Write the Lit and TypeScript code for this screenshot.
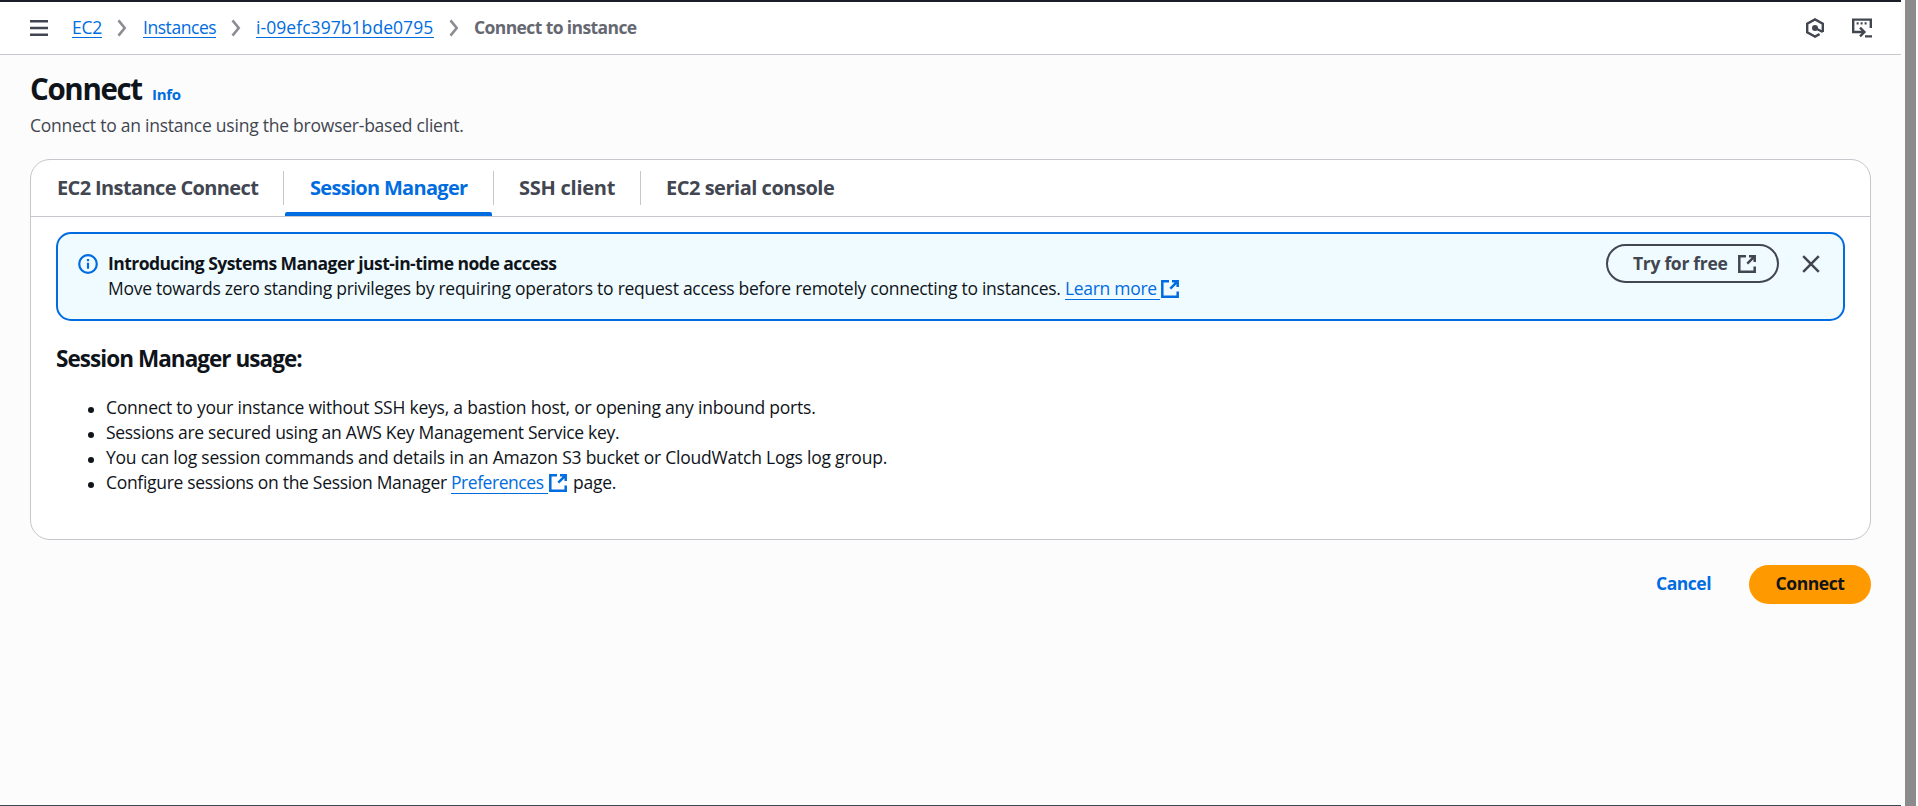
import { LitElement, html, css } from "lit";
import { customElement } from "lit/decorators.js";

const externalIcon = html`<svg class="icon external" viewBox="0 0 20 20" aria-hidden="true">
  <path d="M9 2.3H2.3v15.4h15.4v-5.2" /><path d="M12 2.3h5.7V8M17.3 2.7l-7 7" />
</svg>`;

const chevron = html`<svg class="chevron" viewBox="0 0 20 20" aria-hidden="true">
  <path d="m6.5 2.4 6.2 7.6-6.2 7.6" />
</svg>`;

@customElement("ec2-topbar")
export class Ec2Topbar extends LitElement {
  static styles = css`
    :host { display: flex; align-items: center; height: 52px; padding: 0 29px; background: #fff; border-bottom: 1px solid #c6c6cd; }
    svg { display: block; width: 20px; height: 20px; fill: none; stroke: #424650; stroke-width: 2.4; flex: none; }
    nav { display: flex; align-items: center; flex: 1; margin-left: 23px; padding-bottom: 1px; }
    a { color: #006ce0; text-decoration: none; line-height: 20px; border-bottom: 1.25px solid #006ce0; white-space: nowrap; }
    .service { width: 30px; letter-spacing: -0.3px; }
    .list { width: 73px; letter-spacing: -0.45px; }
    .instance { width: 178px; letter-spacing: 0.06px; }
    .current { color: #656871; font-weight: 700; letter-spacing: -0.6px; }
    .chevron { stroke: #8c8c94; stroke-width: 2.6; margin: 0 10px; }
    .chevron:first-of-type { margin-right: 11px; }
    .tools { display: flex; gap: 27px; }
  `;
  render() {
    return html`
      <svg viewBox="0 0 20 20"><path d="M1 3.2h18M1 10h18M1 16.8h18" /></svg>
      <nav>
        <a class="service">EC2</a>${chevron}
        <a class="list">Instances</a>${chevron}
        <a class="instance">i-09efc397b1bde0795</a>${chevron}
        <span class="current">Connect to instance</span>
      </nav>
      <div class="tools">
        <svg viewBox="0 0 20 20"><path d="M17.8 14V5.6L10 1.4 2.2 5.6v8.8L10 18.6l4.6-2.5M10 10l7.8 4" /><circle cx="10" cy="10" r="1.8" fill="#424650" /></svg>
        <svg viewBox="0 0 20 20"><path d="M5 14H1.2V1.6h17.6V10M5 14h7M8 9.6l4.4 4.4L8 18.4M13 18.4h7M4.6 5.4h2M8.6 5.4h2M12.6 5.4h2" /></svg>
      </div>
    `;
  }
}

@customElement("ec2-tabs")
export class Ec2Tabs extends LitElement {
  static styles = css`
    :host { display: flex; height: 56px; border-bottom: 1px solid #c6c6cd; padding-left: 1px; }
    .tab { display: flex; position: relative; box-sizing: border-box; padding: 15px 0 0 25px; color: #424650; font-size: 20px; line-height: 25px; font-weight: 700; white-space: nowrap; }
    .tab:not(:last-child)::after { content: ""; position: absolute; right: 0; top: 11px; width: 1px; height: 34px; background: #c6c6cd; }
    .connect { width: 252px; letter-spacing: -0.62px; }
    .session { width: 210px; letter-spacing: -0.7px; color: #006ce0; padding-left: 26px; }
    .session::before { content: ""; position: absolute; left: 1px; right: 2px; bottom: 0; height: 4px; border-radius: 2px 2px 0 0; background: #006ce0; }
    .ssh { width: 147px; letter-spacing: -0.25px; }
    .serial { width: 220px; letter-spacing: -0.48px; }
  `;
  render() {
    return html`
      <div class="tab connect">EC2 Instance Connect</div>
      <div class="tab session">Session Manager</div>
      <div class="tab ssh">SSH client</div>
      <div class="tab serial">EC2 serial console</div>
    `;
  }
}

@customElement("app-root")
export class AppRoot extends LitElement {
  static styles = css`
    :host { display: flex; height: 806px; box-sizing: border-box; overflow: hidden; background: #fcfcfd; color: #0f141a; font: 17.5px/25px "Open Sans", "Noto Sans", sans-serif; }
    .page { width: 1901px; height: 806px; box-sizing: border-box; border-top: 2px solid #1b1d28; border-bottom: 1px solid #424650; }
    .scroll { width: 17px; box-sizing: border-box; border-left: 4px solid #fcfcfd; border-right: 2px solid #fcfcfd; background: #8b8b8b; }
    main { padding: 15px 30px 0; }
    h1, h2, p, ul { margin: 0; }
    .title { display: flex; align-items: baseline; gap: 9px; height: 37px; }
    h1 { font-size: 29.5px; line-height: 37px; font-weight: 700; letter-spacing: -1.35px; width: 113px; white-space: nowrap; }
    .info { color: #006ce0; font-size: 15px; font-weight: 700; letter-spacing: -0.3px; }
    .lead { color: #424650; padding: 6px 0 0; margin-bottom: 21px; letter-spacing: -0.235px; }
    .card { box-sizing: border-box; height: 381px; border: 1px solid #c6c6cd; border-radius: 20px; background: #fff; }
    .body { padding: 15px 25px 0; }
    .alert { display: flex; box-sizing: border-box; height: 89px; border: 2px solid #006ce0; border-radius: 15px; background: #f0fbff; padding: 10px 22px 0 20px; align-items: flex-start; }
    .icon { width: 20px; height: 20px; fill: none; stroke: currentColor; stroke-width: 2.5; flex: none; }
    .status { color: #006ce0; margin: 10px 10px 0 0; stroke-width: 2.2; }
    .message { flex: 1; padding-top: 7px; }
    .headline { font-weight: 700; letter-spacing: -0.53px; }
    .text { letter-spacing: -0.264px; }
    a { display: inline-flex; align-items: flex-start; color: #006ce0; border-bottom: 1.25px solid #006ce0; line-height: 25px; vertical-align: top; }
    .learn { width: 95px; height: 23px; letter-spacing: -0.3px; }
    .prefs { width: 97px; height: 23px; letter-spacing: -0.45px; }
    .external { vertical-align: top; margin-top: 3px; }
    a + .external { color: #006ce0; }
    .try { display: flex; box-sizing: border-box; width: 173px; height: 39px; border: 2px solid #424650; border-radius: 20px; color: #424650; font-weight: 700; padding: 5px 0 0 25px; gap: 9px; white-space: nowrap; letter-spacing: -0.3px; }
    .try .external { margin-top: 3px; }
    .close { color: #424650; margin: 10px 0 0 22px; }
    h2 { font-size: 22.5px; line-height: 28px; font-weight: 700; letter-spacing: -0.95px; margin-top: 24px; }
    ul { list-style: none; padding: 22px 0 0 30px; }
    li { display: flex; align-items: flex-start; height: 25px; white-space: pre; }
    li::before { content: ""; width: 6px; height: 6px; border-radius: 50%; background: #0f141a; margin: 12px 12px 0 2px; }
    .ports { letter-spacing: -0.22px; }
    .key { letter-spacing: -0.3px; }
    .logs { letter-spacing: -0.22px; }
    .configure { letter-spacing: -0.31px; width: 345px; }
    .rest { letter-spacing: -0.25px; margin-left: 5px; }
    .actions { display: flex; justify-content: flex-end; align-items: center; margin-top: 25px; gap: 38px; }
    .cancel { color: #006ce0; font-weight: 700; letter-spacing: -0.5px; padding-bottom: 2px; }
    .primary { display: flex; box-sizing: border-box; align-items: center; justify-content: center; width: 122px; height: 39px; padding-bottom: 2px; border-radius: 20px; background: #ff9900; font-weight: 700; letter-spacing: -0.45px; }
  `;
  render() {
    return html`
      <div class="page">
        <ec2-topbar></ec2-topbar>
        <main>
          <div class="title"><h1>Connect</h1><span class="info">Info</span></div>
          <p class="lead">Connect to an instance using the browser-based client.</p>
          <section class="card">
            <ec2-tabs></ec2-tabs>
            <div class="body">
              <div class="alert">
                <svg class="icon status" viewBox="0 0 20 20"><circle cx="10" cy="10" r="8.8" /><path d="M10 8.7v6M10 5v2.2" /></svg>
                <div class="message">
                  <div class="headline">Introducing Systems Manager just-in-time node access</div>
                  <div class="text">Move towards zero standing privileges by requiring operators to request access before remotely connecting to instances. <a class="learn">Learn more</a>${externalIcon}</div>
                </div>
                <div class="try">Try for free ${externalIcon}</div>
                <svg class="icon close" viewBox="0 0 20 20"><path d="m2.2 2.2 15.6 15.6M17.8 2.2 2.2 17.8" /></svg>
              </div>
              <h2>Session Manager usage:</h2>
              <ul>
                <li><span class="ports">Connect to your instance without SSH keys, a bastion host, or opening any inbound ports.</span></li>
                <li><span class="key">Sessions are secured using an AWS Key Management Service key.</span></li>
                <li><span class="logs">You can log session commands and details in an Amazon S3 bucket or CloudWatch Logs log group.</span></li>
                <li><span class="configure">Configure sessions on the Session Manager </span><a class="prefs">Preferences</a>${externalIcon}<span class="rest">page.</span></li>
              </ul>
            </div>
          </section>
          <div class="actions"><span class="cancel">Cancel</span><span class="primary">Connect</span></div>
        </main>
      </div>
      <div class="scroll"></div>
    `;
  }
}
